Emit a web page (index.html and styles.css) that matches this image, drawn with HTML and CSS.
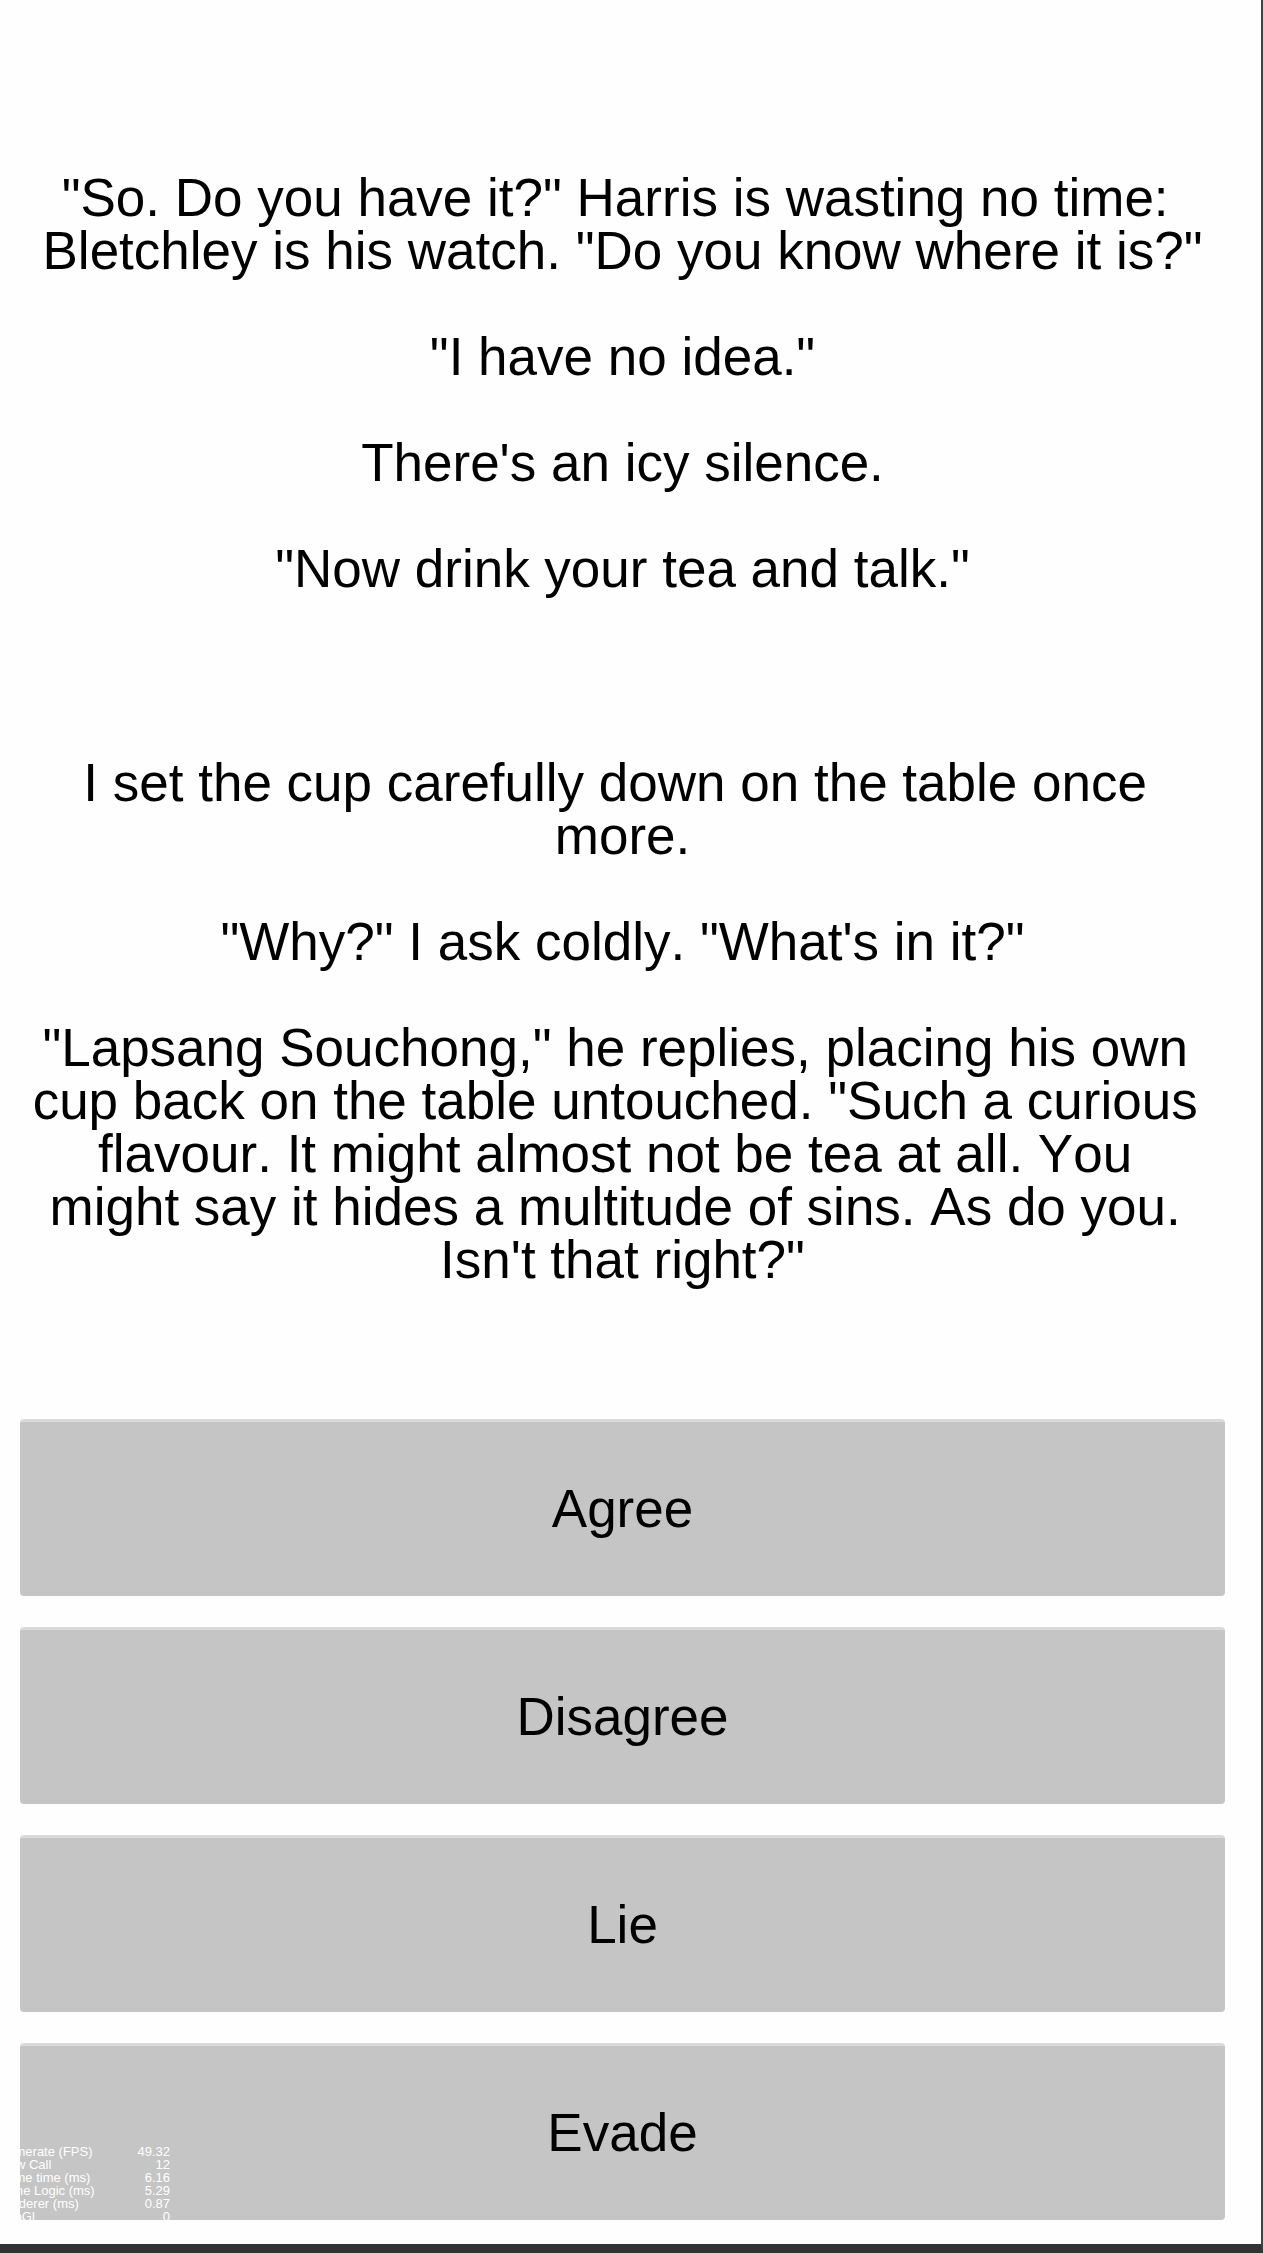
FILE: index.html
```
<!DOCTYPE html>
<html lang="en">
<head>
<meta charset="utf-8">
<meta name="viewport" content="width=device-width, initial-scale=1">
<title>The Intercept</title>
<link rel="stylesheet" href="styles.css">
</head>
<body>
<main class="game">
  <article class="story">
    <section class="passage">
      <p>"So. Do you have it?" Harris is wasting no time: Bletchley is his watch. "Do you know where it is?"</p>
      <p>"I have no idea."</p>
      <p>There's an icy silence.</p>
      <p>"Now drink your tea and talk."</p>
    </section>
    <section class="passage">
      <p>I set the cup carefully down on the table once more.</p>
      <p>"Why?" I ask coldly. "What's in it?"</p>
      <p>"Lapsang Souchong," he replies, placing his own cup back on the table untouched. "Such a curious flavour. It might almost not be tea at all. You might say it hides a multitude of sins. As do you. Isn't that right?"</p>
    </section>
  </article>
  <div class="choices">
    <button class="choice" type="button">Agree</button>
    <button class="choice" type="button">Disagree</button>
    <button class="choice" type="button">Lie</button>
    <button class="choice" type="button">Evade</button>
    <div class="stats">
      <table class="stats-table">
        <tr><th scope="row">Framerate (FPS)</th><td>49.32</td></tr>
        <tr><th scope="row">Draw Call</th><td>12</td></tr>
        <tr><th scope="row">Frame time (ms)</th><td>6.16</td></tr>
        <tr><th scope="row">Game Logic (ms)</th><td>5.29</td></tr>
        <tr><th scope="row">Renderer (ms)</th><td>0.87</td></tr>
        <tr><th scope="row">WebGL</th><td>0</td></tr>
      </table>
    </div>
  </div>
</main>
</body>
</html>
```
FILE: styles.css
```
* {
  box-sizing: border-box;
}

body {
  margin: 0;
  background: #fefefe;
  color: #000;
  font-family: "Liberation Sans", Arial, Helvetica, sans-serif;
  font-kerning: none;
}

.game {
  display: flex;
  flex-direction: column;
  gap: 133px;
  min-height: 100vh;
  padding: 171px 36px 24px 20px;
  border-right: 2px solid #444;
  border-bottom: 9px solid #333;
}

.story {
  display: flex;
  flex-direction: column;
  gap: 161px;
  padding: 0 11px;
  font-size: 53px;
  line-height: 53px;
  text-align: center;
}

.passage {
  display: flex;
  flex-direction: column;
  gap: 53px;
}

.passage p {
  margin: 0;
  white-space: break-spaces;
}

.choices {
  position: relative;
  display: flex;
  flex-direction: column;
  gap: 31px;
}

.choice {
  height: 177px;
  padding: 0 0 2px;
  border: 0;
  border-top: 3px solid #dadada;
  border-radius: 4px;
  background: #c5c5c5;
  color: #000;
  font: inherit;
  font-size: 53px;
  line-height: 53px;
  cursor: pointer;
}

/* Profiler readout, cut off by the edges of the choice list */
.stats {
  position: absolute;
  left: 0;
  bottom: 0;
  height: 75px;
  overflow: hidden;
  pointer-events: none;
}

.stats-table {
  width: 175px;
  margin-left: -25px;
  border-collapse: collapse;
  color: #fff;
  font-size: 13px;
  line-height: 13px;
}

.stats-table th,
.stats-table td {
  padding: 0;
  font-weight: normal;
  text-align: left;
  white-space: nowrap;
}

.stats-table td {
  text-align: right;
}
```
